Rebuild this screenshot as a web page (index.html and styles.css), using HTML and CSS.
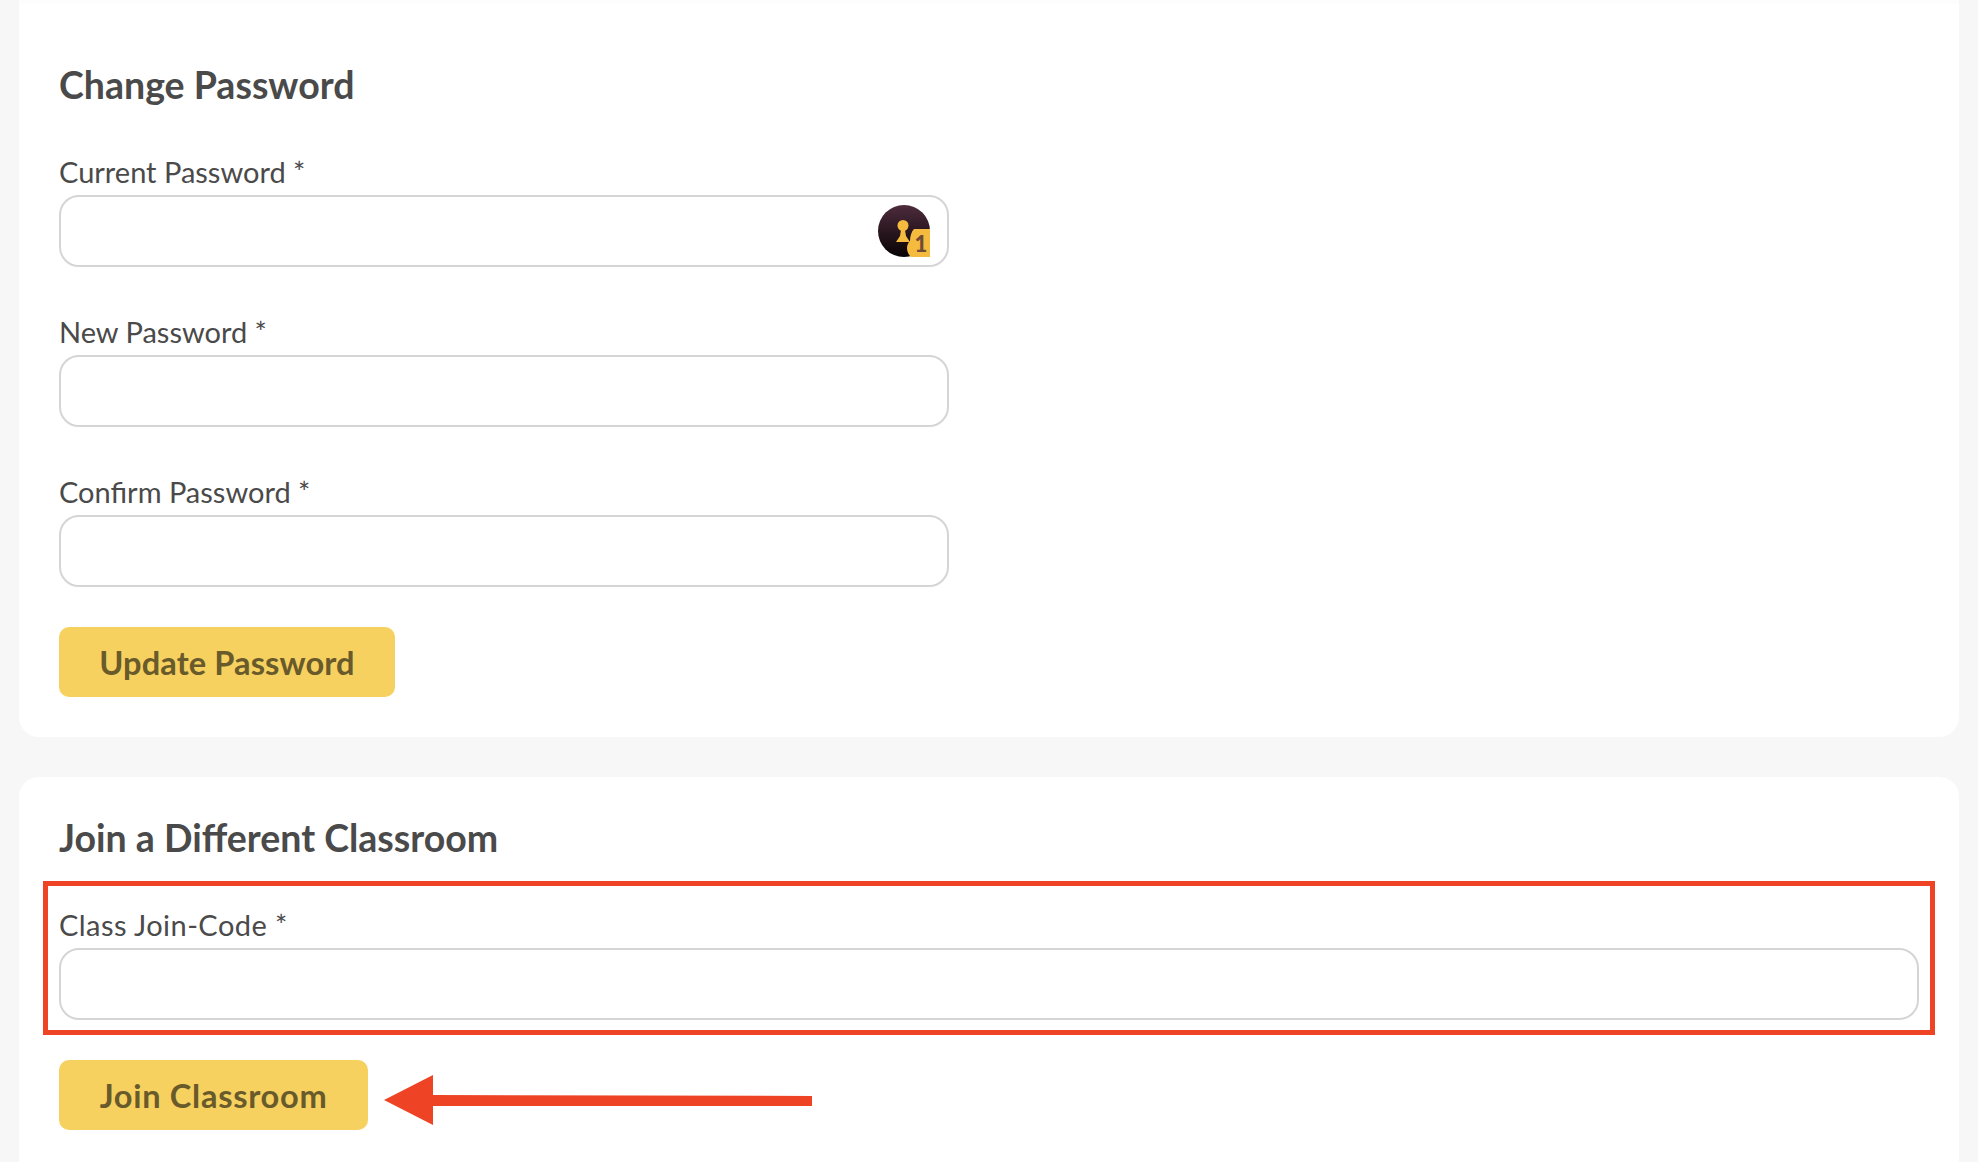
FILE: index.html
```html
<!DOCTYPE html>
<html lang="en">
<head>
<meta charset="utf-8">
<title>Account settings</title>
<link rel="stylesheet" href="styles.css">
</head>
<body>
<main class="page">
  <section class="card card-first">
    <h2 class="title title-first">Change Password</h2>
    <div class="field">
      <label class="label">Current Password *</label>
      <div class="input">
        <svg class="pw-icon" width="52" height="52" viewBox="0 0 52 52" aria-hidden="true">
          <defs>
            <linearGradient id="disc" x1="0" y1="0" x2="0" y2="1">
              <stop offset="0" stop-color="#4d2b3c"/>
              <stop offset="1" stop-color="#080304"/>
            </linearGradient>
          </defs>
          <circle cx="26" cy="26" r="26" fill="url(#disc)"/>
          <circle cx="25" cy="20.500" r="5.500" fill="#f4bb3f"/>
          <path d="M23 25h4l1 6 4 6H18l4-6z" fill="#f4bb3f"/>
          <path d="M36 24h16v28H33c-2-2-4-5-4-9 0-3 1-5 3-7 0-4 1-9 4-12z" fill="#f4bb3f"/>
          <text class="pw-badge" x="43" y="47" text-anchor="middle">1</text>
        </svg>
      </div>
    </div>
    <div class="field">
      <label class="label">New Password *</label>
      <div class="input"></div>
    </div>
    <div class="field">
      <label class="label">Confirm Password *</label>
      <div class="input"></div>
    </div>
    <button class="btn btn-update">Update Password</button>
  </section>
  <section class="card card-second">
    <h2 class="title title-second">Join a Different Classroom</h2>
    <div class="field field-wide">
      <label class="label label-join">Class Join-Code *</label>
      <div class="input"></div>
    </div>
    <button class="btn btn-join">Join Classroom</button>
  </section>
  <div class="highlight"></div>
  <svg class="arrow" width="430" height="52" viewBox="0 0 430 52" aria-hidden="true">
    <path d="M0 25 49 0V20L428 21V31L49 31V50Z" fill="#ee4325"/>
  </svg>
</main>
</body>
</html>
```
FILE: styles.css
```css
* { box-sizing: border-box; }
html, body { margin: 0; height: 100%; }
body {
  background: #f7f7f7;
  font-family: "Lato", "Open Sans", sans-serif;
  color: #4a4a4a;
  overflow: hidden;
}
.page {
  position: relative;
  height: 1162px;
  padding: 0 19px;
}
.card {
  background: #fff;
  border-radius: 20px;
  padding: 0 40px;
}
.card-first {
  height: 737px;
  border-top: 4px solid #fdfdfd;
  border-radius: 0 0 20px 20px;
}
.card-second {
  margin-top: 40px;
  height: 400px;
}
.title {
  margin: 0;
  font-size: 37.5px;
  line-height: 42px;
  font-weight: 700;
  color: #4a4a4a;
}
.title-first { padding-top: 60px; margin-bottom: 49px; }
.title-second { padding-top: 40px; margin-bottom: 49px; }
.field { width: 890px; }
.field + .field { margin-top: 48px; }
.field-wide { width: 1860px; }
.label {
  display: block;
  font-size: 29px;
  line-height: 34px;
  height: 40px;
}
.label-join { letter-spacing: 0.45px; }
.input {
  position: relative;
  height: 72px;
  background: #fff;
  border: 2px solid #d5d5d5;
  border-radius: 20px;
}
.pw-icon {
  position: absolute;
  top: 8px;
  right: 17px;
  overflow: visible;
}
.pw-badge {
  font-family: "Lato", sans-serif;
  font-size: 22px;
  font-weight: 900;
  fill: #6f4a35;
}
.btn {
  display: block;
  height: 70px;
  margin-top: 40px;
  border: 0;
  border-radius: 10px;
  background: #f6d15f;
  color: #695a2b;
  font-family: inherit;
  font-size: 32.6px;
  font-weight: 700;
  padding: 0;
}
.btn-update { width: 336px; letter-spacing: 0.1px; }
.btn-join { width: 309px; letter-spacing: 0.7px; }
.highlight {
  position: absolute;
  left: 43px;
  top: 881px;
  width: 1892px;
  height: 154px;
  border: 5px solid #ee4325;
}
.arrow {
  position: absolute;
  left: 384px;
  top: 1075px;
}
```
